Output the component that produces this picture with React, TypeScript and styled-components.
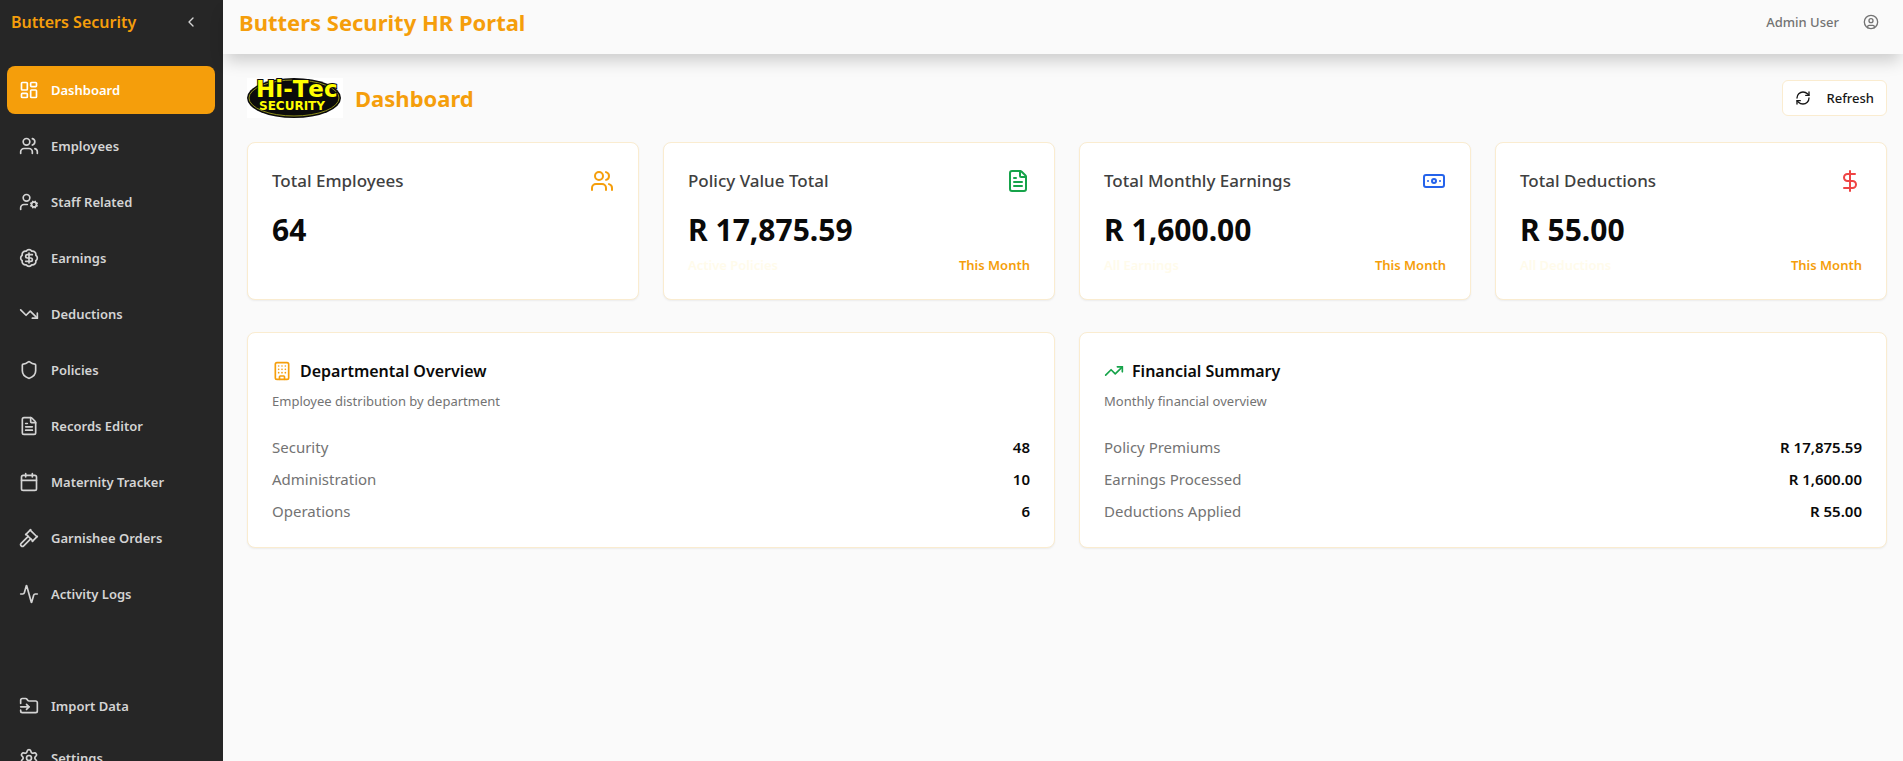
import React from 'react';
import styled, { createGlobalStyle } from 'styled-components';
import {
  Activity,
  BadgeDollarSign,
  Banknote,
  Building,
  Calendar,
  ChevronLeft,
  CircleUser,
  DollarSign,
  FileText,
  FolderInput,
  Gavel,
  LayoutDashboard,
  RefreshCw,
  Settings,
  Shield,
  TrendingDown,
  TrendingUp,
  UserCog,
  Users,
  type LucideIcon,
} from 'lucide-react';

const color = {
  accent: '#f59e0b',
  accentBorder: '#faecd0',
  accentFaint: '#fffbeb',
  page: '#fafafa',
  sidebar: '#262626',
  sidebarText: '#d4d4d4',
  heading: '#404040',
  muted: '#737373',
  ink: '#0a0a0a',
};

const GlobalStyle = createGlobalStyle`
  *, *::before, *::after { box-sizing: border-box; }
  body {
    margin: 0;
    background: ${color.page};
    color: ${color.ink};
    font-family: "Segoe UI", "Noto Sans", "Open Sans", sans-serif;
    font-size: 15px;
    line-height: 24px;
  }
  h1, h2, h3, p, ul, dl, dd { margin: 0; padding: 0; }
  ul { list-style: none; }
  button { font: inherit; cursor: pointer; }
  a { color: inherit; text-decoration: none; }
`;

const Shell = styled.div`
  display: flex;
  height: 100vh;
  overflow: hidden;
`;

const Sidebar = styled.aside`
  display: flex;
  flex: none;
  flex-direction: column;
  width: 223px;
  padding: 0 8px 0 7px;
  overflow: hidden;
  background: ${color.sidebar};
  color: ${color.sidebarText};
`;

const SidebarHeader = styled.div`
  display: flex;
  flex: none;
  align-items: flex-start;
  justify-content: space-between;
  height: 66px;
  padding: 10px 12px 0 4px;
`;

const Brand = styled.p`
  color: ${color.accent};
  font-size: 16px;
  font-weight: 600;
  line-height: 24px;
`;

const IconButton = styled.button`
  display: flex;
  align-items: center;
  justify-content: center;
  width: 24px;
  height: 24px;
  padding: 0;
  border: 0;
  background: none;
  color: inherit;
`;

const Nav = styled.nav`
  display: flex;
  flex: none;
  flex-direction: column;
  gap: 64px;
`;

const NavList = styled.ul<{ $gap: number }>`
  display: flex;
  flex-direction: column;
  gap: ${({ $gap }) => $gap}px;
`;

const NavLink = styled.a<{ $active?: boolean }>`
  display: flex;
  align-items: center;
  gap: 12px;
  height: 48px;
  padding: 0 12px;
  border-radius: 8px;
  background: ${({ $active }) => ($active ? color.accent : 'transparent')};
  color: ${({ $active }) => ($active ? '#fff' : 'inherit')};
  font-size: 13px;
  font-weight: 600;
  line-height: 20px;
`;

const Content = styled.div`
  display: flex;
  flex: 1;
  flex-direction: column;
  min-width: 0;
`;

const TopBar = styled.header`
  display: flex;
  flex: none;
  align-items: flex-start;
  justify-content: space-between;
  height: 54px;
  padding: 8px 20px 0 16px;
  background: ${color.page};
  box-shadow: 0 10px 15px -3px rgba(0, 0, 0, 0.18);
`;

const PageTitle = styled.h1`
  color: ${color.accent};
  font-size: 22px;
  font-weight: 700;
  line-height: 28px;
`;

const SectionTitle = styled(PageTitle).attrs({ as: 'h2' })``;

const Account = styled.div`
  display: flex;
  align-items: center;
  gap: 20px;
  height: 28px;
  color: ${color.muted};
  font-size: 13px;
  font-weight: 500;
  line-height: 20px;
`;

const Main = styled.main`
  flex: 1;
  padding: 24px 16px 24px 24px;
  overflow: hidden;
`;

const TitleRow = styled.div`
  display: flex;
  align-items: center;
  justify-content: space-between;
  margin-bottom: 24px;
`;

const TitleGroup = styled.div`
  display: flex;
  align-items: center;
  gap: 12px;
`;

const LogoSvg = styled.svg`
  display: block;
  width: 96px;
  height: 40px;
  font-kerning: none;
`;

const RefreshButton = styled.button`
  display: flex;
  align-items: center;
  gap: 16px;
  height: 36px;
  padding: 0 12px;
  border: 1px solid ${color.accentBorder};
  border-radius: 6px;
  background: #fff;
  color: #171717;
  font-size: 13px;
  font-weight: 500;
`;

const CardGrid = styled.div<{ $columns: number }>`
  display: grid;
  grid-template-columns: repeat(${({ $columns }) => $columns}, minmax(0, 1fr));
  gap: 24px;
  margin-bottom: 32px;
`;

const Card = styled.section`
  padding: 24px;
  border: 1px solid ${color.accentBorder};
  border-radius: 8px;
  background: #fff;
  box-shadow: 0 1px 2px rgba(0, 0, 0, 0.06);
`;

const StatHeader = styled.div`
  display: flex;
  align-items: center;
  justify-content: space-between;
  height: 28px;
  margin-bottom: 16px;
`;

const StatTitle = styled.h3`
  color: ${color.heading};
  font-size: 17px;
  font-weight: 500;
  line-height: 28px;
`;

const StatValue = styled.p`
  margin-bottom: 6px;
  font-size: 30px;
  font-weight: 700;
  line-height: 38px;
`;

const StatFooter = styled.div`
  display: flex;
  justify-content: space-between;
  color: ${color.accentFaint};
  font-size: 13px;
  font-weight: 600;
  line-height: 20px;
`;

const Period = styled.span`
  color: ${color.accent};
`;

const PanelTitle = styled.h3`
  display: flex;
  align-items: center;
  gap: 8px;
  margin-bottom: 6px;
  font-size: 16px;
  font-weight: 600;
  line-height: 28px;
`;

const PanelNote = styled.p`
  margin-bottom: 24px;
  color: ${color.muted};
  font-size: 13px;
  line-height: 20px;
`;

const Figures = styled.dl`
  display: flex;
  flex-direction: column;
  gap: 8px;
`;

const Figure = styled.div`
  display: flex;
  justify-content: space-between;
`;

const FigureLabel = styled.dt`
  color: ${color.muted};
`;

const FigureValue = styled.dd`
  font-weight: 600;
`;

interface NavEntry {
  label: string;
  icon: LucideIcon;
}

const mainNav: NavEntry[] = [
  { label: 'Dashboard', icon: LayoutDashboard },
  { label: 'Employees', icon: Users },
  { label: 'Staff Related', icon: UserCog },
  { label: 'Earnings', icon: BadgeDollarSign },
  { label: 'Deductions', icon: TrendingDown },
  { label: 'Policies', icon: Shield },
  { label: 'Records Editor', icon: FileText },
  { label: 'Maternity Tracker', icon: Calendar },
  { label: 'Garnishee Orders', icon: Gavel },
  { label: 'Activity Logs', icon: Activity },
];

const toolNav: NavEntry[] = [
  { label: 'Import Data', icon: FolderInput },
  { label: 'Settings', icon: Settings },
];

interface Stat {
  title: string;
  value: string;
  icon: LucideIcon;
  tint: string;
  note?: string;
}

const stats: Stat[] = [
  { title: 'Total Employees', value: '64', icon: Users, tint: '#f59e0b' },
  { title: 'Policy Value Total', value: 'R 17,875.59', icon: FileText, tint: '#16a34a', note: 'Active Policies' },
  { title: 'Total Monthly Earnings', value: 'R 1,600.00', icon: Banknote, tint: '#2563eb', note: 'All Earnings' },
  { title: 'Total Deductions', value: 'R 55.00', icon: DollarSign, tint: '#ef4444', note: 'All Deductions' },
];

interface PanelData {
  title: string;
  note: string;
  icon: LucideIcon;
  tint: string;
  rows: [string, string][];
}

const panels: PanelData[] = [
  {
    title: 'Departmental Overview',
    note: 'Employee distribution by department',
    icon: Building,
    tint: '#f59e0b',
    rows: [
      ['Security', '48'],
      ['Administration', '10'],
      ['Operations', '6'],
    ],
  },
  {
    title: 'Financial Summary',
    note: 'Monthly financial overview',
    icon: TrendingUp,
    tint: '#16a34a',
    rows: [
      ['Policy Premiums', 'R 17,875.59'],
      ['Earnings Processed', 'R 1,600.00'],
      ['Deductions Applied', 'R 55.00'],
    ],
  },
];

function Logo() {
  return (
    <LogoSvg viewBox="0 0 96 40" role="img" aria-label="Hi-Tec Security">
      <rect width="96" height="40" fill="#fff" />
      <ellipse cx="47" cy="20" rx="47" ry="20" fill="#0b0b0b" />
      <ellipse cx="47" cy="20" rx="45" ry="18" fill="none" stroke="#8c8c1c" strokeWidth="1" />
      <g fill="#ffff00" fontFamily="'DejaVu Sans', sans-serif" fontWeight="700">
        <text x="9" y="19" fontSize="23" stroke="#0b0b0b" strokeWidth="2" paintOrder="stroke">
          Hi-Tec
        </text>
        <text x="12" y="32" fontSize="12">
          SECURITY
        </text>
      </g>
    </LogoSvg>
  );
}

function NavItems({ entries, gap, active }: { entries: NavEntry[]; gap: number; active?: string }) {
  return (
    <NavList $gap={gap}>
      {entries.map(({ label, icon: Icon }) => (
        <li key={label}>
          <NavLink href="#" $active={label === active} aria-current={label === active ? 'page' : undefined}>
            <Icon size={20} />
            {label}
          </NavLink>
        </li>
      ))}
    </NavList>
  );
}

export default function App() {
  return (
    <>
      <GlobalStyle />
      <Shell>
        <Sidebar>
          <SidebarHeader>
            <Brand>Butters Security</Brand>
            <IconButton type="button" aria-label="Collapse sidebar">
              <ChevronLeft size={16} />
            </IconButton>
          </SidebarHeader>
          <Nav aria-label="Main">
            <NavItems entries={mainNav} gap={8} active="Dashboard" />
            <NavItems entries={toolNav} gap={4} />
          </Nav>
        </Sidebar>
        <Content>
          <TopBar>
            <PageTitle>Butters Security HR Portal</PageTitle>
            <Account>
              Admin User
              <IconButton type="button" aria-label="Account">
                <CircleUser size={16} />
              </IconButton>
            </Account>
          </TopBar>
          <Main>
            <TitleRow>
              <TitleGroup>
                <Logo />
                <SectionTitle>Dashboard</SectionTitle>
              </TitleGroup>
              <RefreshButton type="button">
                <RefreshCw size={16} />
                Refresh
              </RefreshButton>
            </TitleRow>
            <CardGrid $columns={4}>
              {stats.map(({ title, value, icon: Icon, tint, note }) => (
                <Card key={title}>
                  <StatHeader>
                    <StatTitle>{title}</StatTitle>
                    <Icon size={24} color={tint} />
                  </StatHeader>
                  <StatValue>{value}</StatValue>
                  {note && (
                    <StatFooter>
                      <span>{note}</span>
                      <Period>This Month</Period>
                    </StatFooter>
                  )}
                </Card>
              ))}
            </CardGrid>
            <CardGrid $columns={2}>
              {panels.map(({ title, note, icon: Icon, tint, rows }) => (
                <Card key={title}>
                  <PanelTitle>
                    <Icon size={20} color={tint} />
                    {title}
                  </PanelTitle>
                  <PanelNote>{note}</PanelNote>
                  <Figures>
                    {rows.map(([label, value]) => (
                      <Figure key={label}>
                        <FigureLabel>{label}</FigureLabel>
                        <FigureValue>{value}</FigureValue>
                      </Figure>
                    ))}
                  </Figures>
                </Card>
              ))}
            </CardGrid>
          </Main>
        </Content>
      </Shell>
    </>
  );
}
